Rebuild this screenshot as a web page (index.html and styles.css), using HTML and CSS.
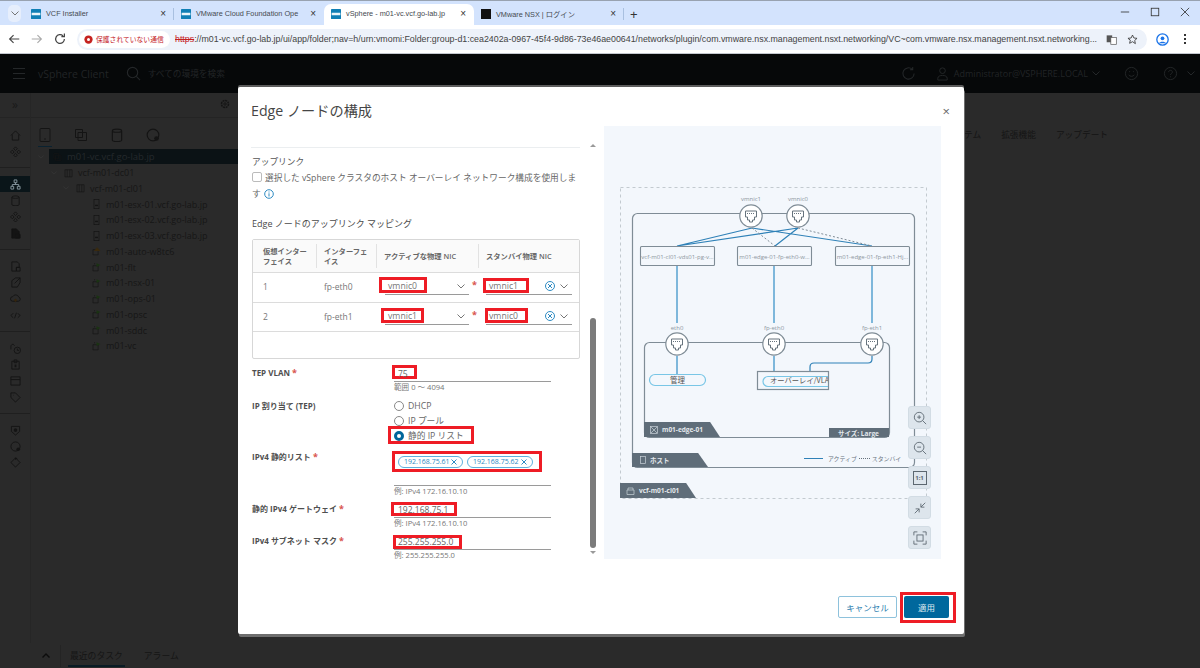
FILE: index.html
```html
<!DOCTYPE html>
<html lang="ja">
<head>
  <meta charset="UTF-8">
  <meta name="viewport" content="width=device-width, initial-scale=1.0">
  <title>vSphere - m01-vc.vcf.go-lab.jp</title>
  <link rel="stylesheet" href="styles.css">
</head>
<body>
  <svg class="defs" width="0" height="0">
    <defs>
      <symbol id="logo" viewBox="0 0 16 16">
        <rect width="16" height="16" rx="1" fill="#0f7fb5"/>
        <rect x="1" y="6" width="14" height="4" fill="#e8f4fa"/>
      </symbol>
      <symbol id="nic" viewBox="0 0 24 24">
        <circle cx="12" cy="12" r="11.200" fill="#fff" stroke="#7f8c96" stroke-width="1.200"/>
        <path d="M6.500 7h11v6h-2v3h-2v2h-3v-2h-2v-3h-2z" fill="none" stroke="#66737d" stroke-width="1"/>
        <path d="M8 9.500h8" stroke="#66737d" stroke-width="1.200" stroke-dasharray="1 1"/>
      </symbol>
      <symbol id="chev" viewBox="0 0 8 5"><path d="M.5.500L4 4l3.500-3.500" fill="none" stroke="#666" stroke-width=".9"/></symbol>
      <symbol id="clear" viewBox="0 0 10 10"><circle cx="5" cy="5" r="4.500" fill="none" stroke="#2d8ac2"/><path d="M3 3l4 4M7 3L3 7" stroke="#2d8ac2"/></symbol>
      <symbol id="r-home" viewBox="0 0 12 12"><path d="M1 6l5-5 5 5M2.500 5v6h7V5" fill="none" stroke="#141414"/></symbol>
      <symbol id="r-net" viewBox="0 0 12 12"><path d="M6 1l2 2-2 2-2-2zM2.500 4.500l2 2-2 2-2-2zM9.500 4.500l2 2-2 2-2-2zM6 8l2 2-2 2-2-2z" fill="none" stroke="#141414"/></symbol>
      <symbol id="r-tree" viewBox="0 0 12 12"><path d="M4.500 1h3v3h-3zM1 8h3v3H1zM8 8h3v3H8zM2.500 8V6h7v2M6 4v2" fill="none" stroke="#8a9aa2"/></symbol>
      <symbol id="r-db" viewBox="0 0 12 12"><path d="M2 2.500c0-2 8-2 8 0v8c0 1.500-8 1.500-8 0zM2 2.500c0 1.500 8 1.500 8 0" fill="none" stroke="#141414"/></symbol>
      <symbol id="r-doc" viewBox="0 0 12 12"><path d="M2 1h5l3 3v7H2zM6 7h5v4H6z" fill="#141414" stroke="#141414"/></symbol>
      <symbol id="r-page" viewBox="0 0 12 12"><path d="M2 1h6l2 2v4H7v4H2zM7 7h4v4H7z" fill="none" stroke="#141414"/></symbol>
      <symbol id="r-send" viewBox="0 0 12 12"><path d="M2 11V4l4-3h5v5l-3 5zM5 7l6-6" fill="none" stroke="#141414"/></symbol>
      <symbol id="r-cloud" viewBox="0 0 12 12"><path d="M3 9a2.500 2.500 0 0 1 0-5 3.500 3.500 0 0 1 6.500.5A2.300 2.300 0 0 1 9 9z" fill="none" stroke="#141414"/><path d="M6 6l2 2-2 2-2-2z" fill="#33250f"/></symbol>
      <symbol id="r-code" viewBox="0 0 12 12"><path d="M3.500 3.500L1 6l2.500 2.500M8.500 3.500L11 6 8.500 8.500M7 3L5 9" fill="none" stroke="#141414"/></symbol>
      <symbol id="r-clock" viewBox="0 0 12 12"><circle cx="8" cy="8" r="3.500" fill="none" stroke="#141414"/><path d="M8 6v2h2M1 7V3l2-2 2 2" fill="none" stroke="#141414"/></symbol>
      <symbol id="r-clip" viewBox="0 0 12 12"><path d="M2 2.500h8V11H2zM4.500 1h3v3h-3z" fill="none" stroke="#141414"/><path d="M5 6h2v3H5z" fill="#141414"/></symbol>
      <symbol id="r-box" viewBox="0 0 12 12"><path d="M1 2h10v9H1zM1 5h10" fill="none" stroke="#141414"/></symbol>
      <symbol id="r-tag" viewBox="0 0 12 12"><path d="M1 1h5l5 5-5 5-5-5zM3.500 3.500h.5" fill="none" stroke="#141414"/></symbol>
      <symbol id="r-shield" viewBox="0 0 12 12"><path d="M1.500 1.500h9V7l-4.500 4-4.500-4z" fill="none" stroke="#141414"/><circle cx="6" cy="5.500" r="2" fill="#141414"/></symbol>
      <symbol id="r-globe" viewBox="0 0 12 12"><circle cx="6" cy="6" r="5" fill="none" stroke="#141414"/><circle cx="9" cy="9" r="2" fill="#141414"/></symbol>
      <symbol id="r-cycle" viewBox="0 0 12 12"><path d="M6 1l5 5-5 5-5-5zM6 3V1l2 1" fill="none" stroke="#141414"/></symbol>
      <symbol id="t-phone" viewBox="0 0 14 14"><rect x="2" y=".5" width="10" height="13" rx="1" fill="none" stroke="#141414"/><path d="M6 11h2" stroke="#141414"/></symbol>
      <symbol id="t-vc" viewBox="0 0 14 14"><path d="M1.500 1.500h7v8h-7zM4 4.500h8.500v8H4z" fill="none" stroke="#141414"/></symbol>
      <symbol id="t-dc" viewBox="0 0 14 14"><path d="M1.500 2h11v11h-11zM5 2v11M9 2v11" fill="none" stroke="#141414"/></symbol>
      <symbol id="t-host" viewBox="0 0 10 14"><rect x="1.500" y=".5" width="7" height="13" fill="none" stroke="#141414"/><path d="M3 9h4" stroke="#141414" stroke-width="2"/></symbol>
      <symbol id="t-vm" viewBox="0 0 14 14"><path d="M1.500 5h8v8h-8zM4 3V1" fill="none" stroke="#141414"/><path d="M7 1l6 3-6 3z" fill="#1a3312"/></symbol>
      <symbol id="t-vmw" viewBox="0 0 14 14"><path d="M1.500 5h8v8h-8z" fill="none" stroke="#141414"/><path d="M8 1l5 6H3z" fill="#3a2a0d"/></symbol>
    </defs>
  </svg>

  <div class="tabstrip">
    <span class="tab-menu">
      <svg width="8" height="5"><use href="#chev"/></svg>
    </span>
    <div class="tab"><svg class="fav"><use href="#logo"/></svg><span class="tab-title">VCF Installer</span><span class="tab-x">&times;</span></div>
    <i class="tab-div"></i>
    <div class="tab"><svg class="fav"><use href="#logo"/></svg><span class="tab-title">VMware Cloud Foundation Ope</span><span class="tab-x">&times;</span></div>
    <div class="tab tab-active"><svg class="fav"><use href="#logo"/></svg><span class="tab-title">vSphere - m01-vc.vcf.go-lab.jp</span><span class="tab-x">&times;</span></div>
    <div class="tab"><span class="fav fav-nsx"></span><span class="tab-title">VMware NSX | ログイン</span><span class="tab-x">&times;</span></div>
    <i class="tab-div"></i>
    <span class="tab-plus">+</span>
    <div class="win-btns">
      <svg width="10" height="10" viewBox="0 0 12 12"><path d="M1 6h10" stroke="#333" fill="none"/></svg>
      <svg width="10" height="10" viewBox="0 0 12 12"><rect x="1.500" y="1.500" width="9" height="9" stroke="#333" fill="none"/></svg>
      <svg width="10" height="10" viewBox="0 0 12 12"><path d="M1 1l10 10M11 1L1 11" stroke="#333" fill="none"/></svg>
    </div>
  </div>

  <div class="toolbar">
    <svg class="tb-icon" viewBox="0 0 16 16"><path d="M14 8H3M7.500 3.500L3 8l4.500 4.500" stroke="#444" stroke-width="1.300" fill="none"/></svg>
    <svg class="tb-icon" viewBox="0 0 16 16"><path d="M2 8h11M8.500 3.500L13 8l-4.500 4.500" stroke="#aaa" stroke-width="1.300" fill="none"/></svg>
    <svg class="tb-icon" viewBox="0 0 16 16"><path d="M13 8a5 5 0 1 1-1.500-3.500M13 1.800v3.400H9.600" stroke="#444" stroke-width="1.400" fill="none"/></svg>
    <div class="omnibox">
      <span class="secure"><svg width="9" height="9" viewBox="0 0 12 12"><circle cx="6" cy="6" r="5.500" fill="#c5221f"/><circle cx="6" cy="6" r="2" fill="#fff"/></svg>保護されていない通信</span>
      <span class="url"><s class="https">https</s>://m01-vc.vcf.go-lab.jp/ui/app/folder;nav=h/urn:vmomi:Folder:group-d1:cea2402a-0967-45f4-9d86-73e46ae00641/networks/plugin/com.vmware.nsx.management.nsxt.networking/VC~com.vmware.nsx.management.nsxt.networking...</span>
      <svg class="omni-icon" viewBox="0 0 16 16"><rect x="1" y="2" width="8" height="10" fill="#555"/><rect x="7" y="5" width="8" height="10" fill="#fff" stroke="#555"/></svg>
      <svg class="omni-icon" viewBox="0 0 16 16"><path d="M8 1.500l2 4.300 4.600.5-3.400 3.100 1 4.600L8 11.200l-4.200 2.300 1-4.600L1.400 6.300 6 5.800z" fill="none" stroke="#333" stroke-width="1.200"/></svg>
    </div>
    <svg class="avatar" viewBox="0 0 16 16"><circle cx="8" cy="8" r="7" fill="none" stroke="#1a73e8" stroke-width="1.600"/><circle cx="8" cy="6.500" r="2.300" fill="#1a73e8"/><path d="M3.800 12.500c1-2.500 7.400-2.500 8.400 0" fill="#1a73e8"/></svg>
    <span class="kebab"><i></i><i></i><i></i></span>
  </div>

  <header class="app-header">
    <span class="burger"><i></i><i></i><i></i></span>
    <span class="brand">vSphere Client</span>
    <svg class="hd-icon" viewBox="0 0 16 16"><circle cx="7" cy="7" r="5.500" fill="none" stroke="#242729" stroke-width="1.200"/><path d="M11 11l4 4" stroke="#242729" stroke-width="1.200"/></svg>
    <span class="search">すべての環境を検索</span>
    <span class="hd-right">
      <svg class="hd-icon" viewBox="0 0 16 16"><path d="M14 8a6 6 0 1 1-2-4.500M12.500 1v3h-3" fill="none" stroke="#242729" stroke-width="1.100"/></svg>
      <span class="hd-user"><svg class="hd-icon" viewBox="0 0 16 16"><circle cx="8" cy="5" r="3" fill="none" stroke="#242729"/><path d="M3 15v-2c0-4 10-4 10 0v2z" fill="none" stroke="#242729"/></svg>Administrator@VSPHERE.LOCAL<svg class="hd-chev" viewBox="0 0 8 5"><path d="M.5.500L4 4l3.500-3.500" fill="none" stroke="#242729"/></svg></span>
      <svg class="hd-icon" viewBox="0 0 16 16"><circle cx="8" cy="8" r="6.500" fill="none" stroke="#242729"/><path d="M5 9.500c1.500 2 4.500 2 6 0M5.500 6h1M9.500 6h1" fill="none" stroke="#242729"/></svg>
      <span class="hd-help"><svg class="hd-icon" viewBox="0 0 16 16"><circle cx="8" cy="8" r="6.500" fill="none" stroke="#242729"/><path d="M6 6.500c0-2.500 4-2.500 4 0 0 1.500-2 1.500-2 3M8 11v1" fill="none" stroke="#242729"/></svg><svg class="hd-chev" viewBox="0 0 8 5"><path d="M.5.500L4 4l3.500-3.500" fill="none" stroke="#242729"/></svg></span>
    </span>
  </header>

  <div class="app-body">
    <aside class="rail">
      <div class="rail-top">&raquo;</div>
      <div class="rail-group rail-first">
        <span class="r-ic"><svg><use href="#r-home"/></svg></span>
        <span class="r-ic"><svg><use href="#r-net"/></svg></span>
      </div>
      <div class="rail-group">
        <span class="r-ic r-sel"><svg><use href="#r-tree"/></svg></span>
        <span class="r-ic"><svg><use href="#r-db"/></svg></span>
        <span class="r-ic"><svg><use href="#r-net"/></svg></span>
        <span class="r-ic"><svg><use href="#r-doc"/></svg></span>
      </div>
      <div class="rail-group">
        <span class="r-ic"><svg><use href="#r-page"/></svg></span>
        <span class="r-ic"><svg><use href="#r-send"/></svg></span>
        <span class="r-ic"><svg><use href="#r-cloud"/></svg></span>
        <span class="r-ic"><svg><use href="#r-code"/></svg></span>
      </div>
      <div class="rail-group">
        <span class="r-ic"><svg><use href="#r-clock"/></svg></span>
        <span class="r-ic"><svg><use href="#r-clip"/></svg></span>
        <span class="r-ic"><svg><use href="#r-box"/></svg></span>
        <span class="r-ic"><svg><use href="#r-tag"/></svg></span>
      </div>
      <div class="rail-group rail-last">
        <span class="r-ic"><svg><use href="#r-shield"/></svg></span>
        <span class="r-ic"><svg><use href="#r-globe"/></svg></span>
        <span class="r-ic"><svg><use href="#r-cycle"/></svg></span>
      </div>
    </aside>
    <section class="tree-pane">
      <div class="tree-top">
        <svg width="10" height="10" viewBox="0 0 10 10"><circle cx="5" cy="5" r="3.500" fill="none" stroke="#141414" stroke-width="1.500" stroke-dasharray="2 .7"/><circle cx="5" cy="5" r="1.200" fill="none" stroke="#141414"/></svg>
      </div>
      <div class="tree-tools">
        <span class="tree-tab tree-tab-on"><svg><use href="#t-phone"/></svg></span>
        <span class="tree-tab"><svg><use href="#t-vc"/></svg></span>
        <span class="tree-tab"><svg><use href="#r-db"/></svg></span>
        <span class="tree-tab"><svg><use href="#r-globe"/></svg></span>
      </div>
      <ul class="tree">
        <li class="lv0"><svg class="tw"><use href="#chev"/></svg><span class="tree-sel"><svg class="node"><use href="#t-vc"/></svg>m01-vc.vcf.go-lab.jp</span></li>
        <li class="lv1"><svg class="tw"><use href="#chev"/></svg><svg class="node"><use href="#t-dc"/></svg>vcf-m01-dc01</li>
        <li class="lv2"><svg class="tw"><use href="#chev"/></svg><svg class="node"><use href="#t-dc"/></svg>vcf-m01-cl01</li>
        <li class="lv3"><svg class="node"><use href="#t-host"/></svg>m01-esx-01.vcf.go-lab.jp</li>
        <li class="lv3"><svg class="node"><use href="#t-host"/></svg>m01-esx-02.vcf.go-lab.jp</li>
        <li class="lv3"><svg class="node"><use href="#t-host"/></svg>m01-esx-03.vcf.go-lab.jp</li>
        <li class="lv3"><svg class="node"><use href="#t-vmw"/></svg>m01-auto-w8tc6</li>
        <li class="lv3"><svg class="node"><use href="#t-vm"/></svg>m01-flt</li>
        <li class="lv3"><svg class="node"><use href="#t-vm"/></svg>m01-nsx-01</li>
        <li class="lv3"><svg class="node"><use href="#t-vm"/></svg>m01-ops-01</li>
        <li class="lv3"><svg class="node"><use href="#t-vm"/></svg>m01-opsc</li>
        <li class="lv3"><svg class="node"><use href="#t-vm"/></svg>m01-sddc</li>
        <li class="lv3"><svg class="node"><use href="#t-vm"/></svg>m01-vc</li>
      </ul>
    </section>
    <section class="main-pane">
      <div class="main-tabs"><span>システム</span><span>拡張機能</span><span>アップデート</span></div>
    </section>
  </div>

  <footer class="task-bar">
    <span class="task-chev"><svg width="8" height="5" viewBox="0 0 8 5"><path d="M.5 4.500L4 1l3.500 3.500" fill="none" stroke="#0c0c0c" stroke-width="1.400"/></svg></span>
    <span class="task-tab task-tab-on">最近のタスク</span>
    <span class="task-tab">アラーム</span>
  </footer>

  <div class="modal">
    <div class="modal-head">
      <h2>Edge ノードの構成</h2>
      <span class="modal-x">&times;</span>
    </div>
    <div class="modal-body">
      <div class="form-pane">
        <div class="form-scroll">
          <div class="form-rule"></div>
          <h3 class="uplink-title">アップリンク</h3>
          <label class="check-row"><span class="checkbox"></span>選択した vSphere クラスタのホスト オーバーレイ ネットワーク構成を使用します<svg class="info" viewBox="0 0 10 10"><circle cx="5" cy="5" r="4.300" fill="none" stroke="#2d8ac2"/><path d="M5 4.300v3.200M5 2.500v1" stroke="#2d8ac2"/></svg></label>
          <h3 class="map-title">Edge ノードのアップリンク マッピング</h3>
          <div class="map-table">
            <div class="map-row map-head">
              <div class="c1 sep"><span>仮想インター<br>フェイス</span></div>
              <div class="c2 sep"><span>インターフェ<br>イス</span></div>
              <div class="c3 sep">アクティブな物理 NIC</div>
              <div class="c4">スタンバイ物理 NIC</div>
            </div>
            <div class="map-row row-a">
              <div class="c1">1</div>
              <div class="c2">fp-eth0</div>
              <div class="c3"><div class="select"><span class="val">vmnic0</span><span class="mark mk-a0"></span><svg class="chev"><use href="#chev"/></svg></div><b class="req">*</b></div>
              <div class="c4"><div class="select select-wide"><span class="val">vmnic1</span><span class="mark mk-a1"></span><svg class="clear"><use href="#clear"/></svg><svg class="chev"><use href="#chev"/></svg></div></div>
            </div>
            <div class="map-row row-b">
              <div class="c1">2</div>
              <div class="c2">fp-eth1</div>
              <div class="c3"><div class="select"><span class="val">vmnic1</span><span class="mark mk-b0"></span><svg class="chev"><use href="#chev"/></svg></div><b class="req">*</b></div>
              <div class="c4"><div class="select select-wide"><span class="val">vmnic0</span><span class="mark mk-b1"></span><svg class="clear"><use href="#clear"/></svg><svg class="chev"><use href="#chev"/></svg></div></div>
            </div>
          </div>

          <div class="field f-vlan">
            <label>TEP VLAN <b class="req">*</b></label>
            <div class="control">
              <div class="input"><span class="val">75</span><span class="mark mk-vlan"></span></div>
              <p class="hint">範囲 0 ～ 4094</p>
            </div>
          </div>
          <div class="field f-radio">
            <label>IP 割り当て (TEP)</label>
            <div class="control">
              <div class="radio"><span class="dot"></span>DHCP</div>
              <div class="radio"><span class="dot"></span>IP プール</div>
              <div class="radio radio-on"><span class="dot"></span>静的 IP リスト<span class="mark mk-radio"></span></div>
            </div>
          </div>
          <div class="field f-list">
            <label>IPv4 静的リスト <b class="req">*</b></label>
            <div class="control">
              <div class="input input-list">
                <span class="chip">192.168.75.61<svg width="6" height="6" viewBox="0 0 6 6"><path d="M.5.500l5 5M5.500.500l-5 5" stroke="#2d8ac2"/></svg></span>
                <span class="chip">192.168.75.62<svg width="6" height="6" viewBox="0 0 6 6"><path d="M.5.500l5 5M5.500.500l-5 5" stroke="#2d8ac2"/></svg></span>
                <span class="mark mk-list"></span>
              </div>
              <p class="hint">例: IPv4 172.16.10.10</p>
            </div>
          </div>
          <div class="field f-gw">
            <label>静的 IPv4 ゲートウェイ <b class="req">*</b></label>
            <div class="control">
              <div class="input"><span class="val">192.168.75.1</span><span class="mark mk-gw"></span></div>
              <p class="hint">例: IPv4 172.16.10.10</p>
            </div>
          </div>
          <div class="field f-mask">
            <label>IPv4 サブネット マスク <b class="req">*</b></label>
            <div class="control">
              <div class="input"><span class="val">255.255.255.0</span><span class="mark mk-mask"></span></div>
              <p class="hint">例: 255.255.255.0</p>
            </div>
          </div>
        </div>
        <div class="scrollbar"><span class="sb-up"></span><span class="sb-thumb"></span><span class="sb-down"></span></div>
      </div>

      <div class="diagram">
        <svg class="diagram-svg" width="337" height="380" viewBox="0 0 337 380" font-family="'Open Sans','Noto Sans CJK JP',sans-serif">
          <rect x="16.500" y="61.500" width="306" height="311" fill="none" stroke="#c3cad0" stroke-dasharray="3 3"/>
          <rect x="28.500" y="87.500" width="282" height="254" rx="5" fill="none" stroke="#7f8c96" stroke-width="1.200"/>
          <rect x="40.500" y="216.500" width="245" height="95" rx="5" fill="none" stroke="#7f8c96" stroke-width="1.200"/>

          <g stroke="#2f81b7" stroke-width="1.200" fill="none">
            <path d="M148 102L73 120M194 102L73 120M148 102L268 120M194 102L171 120"/>
            <path stroke-width="1.500" stroke="#58a3d0" d="M73 140V197M170 140V197M268 140V197"/>
            <path stroke-width="1.500" stroke="#58a3d0" d="M73 230V248M170 230V245"/>
            <path d="M268 230v3q0 4-4 4h-54q-4 0-4 4v4"/>
          </g>
          <path d="M148 102L171 120M194 102L268 120" stroke="#7f8c96" stroke-dasharray="2 2" fill="none"/>

          <g fill="#f3f7fc" stroke="#7f8c96" stroke-width="1.100">
            <rect x="36.500" y="120.500" width="74" height="19" rx="1"/>
            <rect x="133.500" y="120.500" width="74" height="19" rx="1"/>
            <rect x="231.500" y="120.500" width="74" height="19" rx="1"/>
          </g>
          <g font-size="6" fill="#8c969e" text-anchor="middle">
            <text x="73.500" y="132.500">vcf-m01-cl01-vds01-pg-v...</text>
            <text x="170.500" y="132.500">m01-edge-01-fp-eth0-w...</text>
            <text x="268.500" y="132.500">m01-edge-01-fp-eth1-Hj...</text>
            <text x="147" y="75">vmnic1</text>
            <text x="194" y="75">vmnic0</text>
            <text x="73" y="204">eth0</text>
            <text x="170" y="204">fp-eth0</text>
            <text x="268" y="204">fp-eth1</text>
          </g>

          <use href="#nic" x="135" y="78" width="24" height="24"/>
          <use href="#nic" x="182" y="78" width="24" height="24"/>
          <use href="#nic" x="61" y="206" width="24" height="24"/>
          <use href="#nic" x="158" y="206" width="24" height="24"/>
          <use href="#nic" x="256" y="206" width="24" height="24"/>

          <rect x="45.500" y="248.500" width="56" height="11" rx="5.500" fill="#f3f7fc" stroke="#79c6e6" stroke-width="1.200"/>
          <text x="73.500" y="257" font-size="7.500" fill="#555" text-anchor="middle" font-family="'Noto Sans CJK JP',sans-serif">管理</text>
          <rect x="153.500" y="245.500" width="71" height="18" fill="#f3f7fc" stroke="#7f8c96" stroke-width="1.200"/>
          <path d="M224 250.500h-60a5 5 0 0 0 0 10h60" fill="none" stroke="#79c6e6" stroke-width="1.200"/>
          <svg x="153" y="245" width="71" height="18" viewBox="0 0 71 18">
            <text x="13" y="12" font-size="7.300" fill="#555" font-family="'Noto Sans CJK JP',sans-serif">オーバーレイ/VLAN</text>
          </svg>
        </svg>
        <div class="d-tag tag-edge"><svg width="8" height="8" viewBox="0 0 8 8"><rect x=".5" y=".5" width="7" height="7" fill="none" stroke="#c9d2d9" stroke-width=".7"/><path d="M1 1l6 6M7 1L1 7" stroke="#c9d2d9" stroke-width=".7"/></svg>m01-edge-01</div>
        <div class="d-tag tag-size">サイズ: Large</div>
        <div class="d-tag tag-host"><svg width="6" height="8" viewBox="0 0 6 8"><rect x=".5" y=".5" width="5" height="7" fill="none" stroke="#c9d2d9" stroke-width=".7"/></svg>ホスト</div>
        <div class="d-tag tag-cluster"><svg width="9" height="8" viewBox="0 0 9 8"><path d="M1 3h7v4.500H1zM2 3V1h5v2" fill="none" stroke="#c9d2d9" stroke-width=".7"/></svg>vcf-m01-cl01</div>
        <div class="legend"><i></i>アクティブ<u></u>スタンバイ</div>
        <div class="zoom-tools">
          <span class="ztool"><svg width="14" height="14" viewBox="0 0 16 16"><circle cx="7" cy="7" r="5.500" fill="none" stroke="#5c6770"/><path d="M11 11l4 4M4.800 7h4.400M7 4.800v4.400" stroke="#5c6770"/></svg></span>
          <span class="ztool"><svg width="14" height="14" viewBox="0 0 16 16"><circle cx="7" cy="7" r="5.500" fill="none" stroke="#5c6770"/><path d="M11 11l4 4M4.800 7h4.400" stroke="#5c6770"/></svg></span>
          <span class="ztool"><span class="one-one">1:1</span></span>
          <span class="ztool"><svg width="14" height="14" viewBox="0 0 16 16"><path d="M2 14l5-5M3 9h4v4M14 2L9 7M9 3v4h4" fill="none" stroke="#5c6770"/></svg></span>
          <span class="ztool"><svg width="14" height="14" viewBox="0 0 16 16"><rect x="4.500" y="4.500" width="7" height="7" fill="none" stroke="#5c6770"/><path d="M1 5V1h4M11 1h4v4M15 11v4h-4M5 15H1v-4" fill="none" stroke="#5c6770"/></svg></span>
        </div>
      </div>
    </div>
    <div class="modal-foot">
      <button class="btn btn-ghost">キャンセル</button>
      <span class="apply-mark"><button class="btn btn-apply">適用</button></span>
    </div>
  </div>
</body>
</html>
```

FILE: styles.css
```css
* {
  box-sizing: border-box;
}

html, body {
  margin: 0;
  padding: 0;
  height: 668px;
  overflow: hidden;
}

body {
  position: relative;
  display: flex;
  flex-direction: column;
  font-family: "Open Sans", "Noto Sans CJK JP", sans-serif;
  background: #2a2a2a;
  color: #666;
}

.defs {
  position: absolute;
}

/* browser chrome */
.tabstrip {
  height: 25px;
  flex: none;
  display: flex;
  align-items: flex-end;
  background: #d3e3fd;
  border-top: 1px solid #98a2b0;
  padding-left: 8px;
  font-family: "Liberation Sans", "Noto Sans CJK JP", sans-serif;
  font-size: 7.300px;
  color: #454a50;
}

.tab-menu {
  width: 13px;
  height: 17px;
  margin: 0 3px 3px 0;
  display: flex;
  align-items: center;
  justify-content: center;
  background: #e6eefc;
  border-radius: 5px;
}

.tab {
  width: 150px;
  height: 21px;
  flex: none;
  display: flex;
  align-items: center;
  padding: 0 8px 2px 7px;
  gap: 5px;
}

.tab-div {
  width: 1px;
  height: 12px;
  margin: 0 0 5px -1px;
  background: #a9c0e0;
}

.tab-active {
  background: #fff;
  border-radius: 7px 7px 0 0;
}

.fav {
  width: 10px;
  height: 10px;
  flex: none;
}

.fav-nsx {
  background: #111;
}

.tab-title {
  flex: 1;
  white-space: nowrap;
}

.tab-x {
  font-size: 10px;
  color: #333;
}

.tab-plus {
  font-size: 13px;
  line-height: 20px;
  padding-left: 6px;
  color: #333;
}

.win-btns {
  margin-left: auto;
  height: 24px;
  display: flex;
  align-items: center;
  gap: 20px;
  padding: 0 10px 2px 0;
}

.toolbar {
  height: 29px;
  flex: none;
  display: flex;
  align-items: center;
  background: #fff;
  padding-left: 7px;
  border-bottom: 1px solid #c3c7cf;
}

.tb-icon {
  width: 14px;
  height: 14px;
  margin-right: 9px;
  flex: none;
}

.omnibox {
  width: 1070px;
  height: 21px;
  margin-left: 1px;
  flex: none;
  display: flex;
  align-items: center;
  background: #edf2fa;
  border-radius: 11px;
  padding-left: 2px;
  font-family: "Liberation Sans", "Noto Sans CJK JP", sans-serif;
  color: #444;
}

.secure {
  height: 17px;
  width: 91px;
  flex: none;
  display: flex;
  align-items: center;
  gap: 3px;
  padding-left: 5px;
  background: #fff;
  border-radius: 9px;
  color: #c5221f;
  font-size: 6.800px;
  white-space: nowrap;
}

.url {
  flex: none;
  width: 931px;
  margin-left: 5px;
  white-space: nowrap;
  font-size: 8.830px;
}

.https {
  color: #c5221f;
}

.omni-icon {
  width: 11px;
  height: 11px;
  margin-right: 10px;
  flex: none;
}

.avatar {
  width: 13px;
  height: 13px;
  margin-left: 9px;
  flex: none;
}

.kebab {
  display: flex;
  flex-direction: column;
  gap: 2px;
  margin-left: 15px;
}

.kebab i {
  display: block;
  width: 2px;
  height: 2px;
  background: #333;
}

/* dimmed vSphere client behind the dialog */
.app-header {
  height: 39px;
  flex: none;
  display: flex;
  align-items: center;
  background: #060809;
  padding-left: 13px;
  color: #212426;
  font-size: 9px;
}

.burger {
  display: flex;
  flex-direction: column;
  gap: 4px;
  margin-right: 13px;
}

.burger i {
  display: block;
  width: 12px;
  height: 1px;
  background: #242729;
}

.brand {
  font-size: 10.500px;
  margin-right: 17px;
}

.hd-icon {
  width: 15px;
  height: 15px;
  margin-right: 7px;
  flex: none;
}

.search {
  font-size: 8.700px;
}

.hd-right {
  margin-left: auto;
  display: flex;
  align-items: center;
  padding-right: 5px;
}

.hd-right > .hd-icon {
  margin-right: 0;
}

.hd-user {
  display: flex;
  align-items: center;
  white-space: nowrap;
  font-size: 9px;
  margin: 0 24px 0 19px;
}

.hd-user .hd-icon {
  margin-right: 4px;
}

.hd-help {
  display: flex;
  align-items: center;
  margin-left: 24px;
}

.hd-help .hd-icon {
  margin-right: 5px;
}

.hd-chev {
  width: 8px;
  height: 5px;
  margin-left: 4px;
  flex: none;
}

.app-body {
  flex: 1;
  display: flex;
  min-height: 0;
}

.rail {
  width: 31px;
  flex: none;
  border-right: 1px solid #262626;
}

.rail-top {
  height: 25px;
  text-align: center;
  font-size: 12px;
  line-height: 24px;
  color: #191919;
  border-bottom: 1px solid #242424;
}

.rail-group {
  height: 82px;
  display: flex;
  flex-direction: column;
  padding-top: 8px;
  border-bottom: 1px solid #1f1f1f;
}

.rail-first {
  height: 50px;
  padding-top: 9px;
}

.rail-last {
  border-bottom: 0;
}

.r-ic {
  height: 16.300px;
  flex: none;
  display: flex;
  align-items: center;
  justify-content: center;
}

.r-ic svg {
  width: 11px;
  height: 11px;
}

.r-sel {
  background: #0a1519;
}

.tree-pane {
  width: 207px;
  flex: none;
}

.tree-top {
  height: 25px;
  display: flex;
  align-items: center;
  justify-content: flex-end;
  padding: 0 8px 2px 0;
  border-bottom: 1px solid #242424;
}

.tree-tools {
  height: 31px;
  display: flex;
  gap: 22px;
  padding: 10px 0 0 7px;
}

.tree-tab {
  width: 14px;
  height: 19px;
  padding-bottom: 5px;
}

.tree-tab svg {
  display: block;
  width: 14px;
  height: 14px;
}

.tree-tab-on {
  border-bottom: 1px solid #0a2230;
}

.tree {
  list-style: none;
  margin: 0;
  padding: 0;
  font-size: 9px;
  color: #161616;
}

.tree li {
  height: 15.750px;
  display: flex;
  align-items: center;
  white-space: nowrap;
}

.tw {
  width: 6px;
  height: 4px;
  flex: none;
  opacity: .25;
}

.node {
  width: 9px;
  height: 10px;
  margin-right: 5px;
  flex: none;
}

.tree-sel {
  height: 15px;
  flex: 1;
  display: flex;
  align-items: center;
  margin-left: 5px;
  padding-left: 4px;
  background: #0b1215;
  font-size: 9.500px;
  color: #24292c;
}

.lv0 {
  padding-left: 7px;
}

.lv1 {
  padding-left: 20px;
}

.lv2 {
  padding-left: 32px;
}

.lv1 .tw, .lv2 .tw {
  margin-right: 7px;
}

.lv3 {
  padding-left: 61px;
}

.main-pane {
  flex: 1;
}

.main-tabs {
  display: flex;
  justify-content: flex-end;
  gap: 20px;
  padding: 35px 92px 0 0;
  font-size: 8.700px;
  color: #141414;
}

.task-bar {
  height: 25px;
  flex: none;
  display: flex;
  align-items: center;
  padding-left: 42px;
  font-size: 8.800px;
  color: #151515;
}

.task-chev {
  width: 19px;
  height: 22px;
  display: flex;
  align-items: center;
  border-right: 1px solid #242424;
  margin-right: 7px;
}

.task-tab {
  height: 22px;
  line-height: 22px;
  padding: 0 2px;
  margin-right: 17px;
}

.task-tab-on {
  border-bottom: 2px solid #0a1b24;
}

/* dialog */
.modal {
  position: absolute;
  left: 238px;
  top: 87px;
  width: 726px;
  height: 547px;
  display: flex;
  flex-direction: column;
  background: #fff;
  border-radius: 2px;
  box-shadow: 1px 3px 0 #6e6e6e, 0 -2px 0 #5c5c5c;
  padding: 0 13px;
}

.modal-head {
  height: 39px;
  flex: none;
  display: flex;
  align-items: center;
  justify-content: space-between;
  padding-top: 9px;
}

.modal-head h2 {
  margin: 0;
  font-size: 14.200px;
  font-weight: 400;
  line-height: 24px;
  color: #454545;
}

.modal-x {
  font-size: 13px;
  line-height: 24px;
  color: #666;
  margin-right: 1px;
}

.modal-body {
  height: 465px;
  flex: none;
  display: flex;
}

.form-pane {
  width: 353px;
  flex: none;
  display: flex;
}

.form-scroll {
  width: 329px;
  flex: none;
  padding-top: 21px;
  font-size: 8.700px;
}

.form-rule {
  height: 1px;
  background: #ebeef0;
}

.scrollbar {
  width: 8px;
  height: 430px;
  margin-left: 9px;
  display: flex;
  flex-direction: column;
  align-items: center;
  padding-top: 18px;
}

.sb-up, .sb-down {
  width: 0;
  height: 0;
  flex: none;
  border-left: 3px solid transparent;
  border-right: 3px solid transparent;
}

.sb-up {
  border-bottom: 3px solid #999;
}

.sb-down {
  border-top: 3px solid #999;
  margin-top: 3px;
}

.sb-thumb {
  width: 6px;
  height: 230px;
  flex: none;
  margin-top: 171px;
  background: #7b7b7b;
  border-radius: 3px;
}

.uplink-title {
  margin: 7px 0 0 1px;
  font-size: 8.700px;
  font-weight: 400;
  line-height: 14px;
  color: #555;
}

.check-row {
  display: block;
  margin: 1px 0 0 1px;
  padding-right: 3px;
  line-height: 16px;
  color: #666;
}

.checkbox {
  display: inline-block;
  width: 10px;
  height: 10px;
  margin-right: 3px;
  vertical-align: -1px;
  border: 1px solid #bbb;
  border-radius: 2px;
}

.info {
  display: inline-block;
  width: 10px;
  height: 10px;
  margin-left: 3px;
  vertical-align: -2px;
}

.map-title {
  margin: 14px 0 7px 1px;
  font-size: 9px;
  font-weight: 400;
  line-height: 16px;
  color: #4a4a4a;
}

.map-table {
  margin-left: 1px;
  height: 120px;
  border: 1px solid #d7d7d7;
  border-radius: 2px;
  font-size: 8.500px;
  color: #777;
}

.map-row {
  display: grid;
  grid-template-columns: 64px 60px 102px 1fr;
  height: 30px;
  border-bottom: 1px solid #dcdcdc;
  padding-top: 5px;
  line-height: 17px;
}

.row-b {
  height: 29px;
}

.map-head {
  height: 33px;
  padding-top: 4px;
  background: #fafafa;
  color: #666;
  font-size: 7.300px;
  font-weight: 600;
  line-height: 10px;
}

.c1 {
  padding-left: 10px;
}

.c2 {
  padding-left: 7px;
}

.c3, .c4 {
  display: flex;
  padding-left: 7px;
}

.map-head .c4 {
  height: 24px;
  align-items: center;
}

.map-row:not(.map-head) .c3 {
  padding-left: 8px;
}

.sep {
  height: 24px;
  display: flex;
  align-items: center;
  border-right: 1px solid #e2e2e2;
}

.select {
  position: relative;
  width: 84px;
  height: 17px;
  flex: none;
  display: flex;
  align-items: center;
  border-bottom: 1px solid #9a9a9a;
  padding: 0 4px 0 3px;
  gap: 5px;
  font-size: 8.700px;
  color: #777;
}

.select-wide {
  width: 86px;
}

.select .val {
  margin-right: auto;
}

.chev {
  width: 8px;
  height: 5px;
  flex: none;
}

.clear {
  width: 10px;
  height: 10px;
  flex: none;
}

.req {
  color: #d9534f;
  font-weight: 700;
  font-size: 9px;
}

.c3 .req {
  margin-left: 3px;
  line-height: 13px;
}

/* red review marks drawn over the screenshot */
.mark {
  position: absolute;
  border: 3px solid #ee1c25;
}

.val {
  position: relative;
  z-index: 1;
}

.mk-a0 { left: -6px; top: -1px; width: 48px; height: 16px; }
.mk-a1 { left: -3px; top: 0; width: 46px; height: 15px; }
.mk-b0 { left: -4px; top: 0; width: 43px; height: 15px; }
.mk-b1 { left: -1px; top: 0; width: 43px; height: 15px; }
.mk-vlan { left: -2px; top: -1px; width: 25px; height: 14px; }
.mk-radio { left: -6px; top: -2px; width: 86px; height: 18px; }
.mk-list { left: -2px; top: 1px; width: 150px; height: 21px; }
.mk-gw { left: -3px; top: 0; width: 66px; height: 14px; }
.mk-mask { left: -1px; top: 1px; width: 69px; height: 14px; }

.field {
  display: flex;
}

.field > label {
  width: 143px;
  flex: none;
  padding-left: 1px;
  font-weight: 700;
  font-size: 8px;
  color: #4f4f4f;
  line-height: 14px;
}

.control {
  width: 157px;
  flex: none;
}

.input {
  position: relative;
  height: 16px;
  padding-left: 4px;
  border-bottom: 1px solid #9a9a9a;
  font-size: 8.500px;
  line-height: 16px;
  color: #666;
}

.hint {
  margin: 0;
  font-size: 7.600px;
  line-height: 10px;
  color: #777;
}

.f-vlan, .f-radio, .f-gw, .f-mask {
  margin-top: 6px;
}

.f-vlan {
  margin-top: 7px;
}

.f-radio > label {
  line-height: 15px;
}

.radio {
  position: relative;
  height: 15px;
  display: flex;
  align-items: center;
  gap: 4px;
  font-size: 8.700px;
  color: #666;
}

.dot {
  width: 10px;
  height: 10px;
  flex: none;
  border: 1px solid #888;
  border-radius: 50%;
  background: #fff;
}

.radio-on .dot {
  border: 3px solid #00669b;
}

.f-list {
  margin-top: 7px;
}

.input-list {
  height: 36px;
  display: flex;
  align-items: flex-start;
  gap: 4px;
  padding-top: 6px;
}

.chip {
  width: 65px;
  height: 12px;
  flex: none;
  display: flex;
  align-items: center;
  justify-content: space-between;
  padding: 0 5px;
  border: 1px solid #5fb0dd;
  border-radius: 6px;
  font-size: 7px;
  line-height: 10px;
  color: #2d8ac2;
  white-space: nowrap;
}

.chip + .chip {
  width: 66px;
}

/* topology diagram */
.diagram {
  position: relative;
  width: 337px;
  height: 433px;
  background: #f3f7fc;
  overflow: hidden;
}

.diagram-svg {
  display: block;
}

.d-tag {
  position: absolute;
  display: flex;
  align-items: center;
  gap: 4px;
  padding-left: 6px;
  background: #5f6d79;
  color: #e3e8ec;
  font-size: 6.500px;
  font-weight: 700;
  white-space: nowrap;
}

.tag-edge {
  left: 40px;
  top: 296px;
  width: 76px;
  height: 15px;
  clip-path: polygon(0 0, 87% 0, 100% 100%, 0 100%);
}

.tag-size {
  left: 225px;
  top: 302px;
  width: 60px;
  height: 9px;
  padding-left: 9px;
}

.tag-host {
  left: 28px;
  top: 327px;
  width: 76px;
  height: 14px;
  padding-left: 8px;
  clip-path: polygon(0 0, 87% 0, 100% 100%, 0 100%);
}

.tag-cluster {
  left: 16px;
  top: 357px;
  width: 76px;
  height: 15px;
  clip-path: polygon(0 0, 87% 0, 100% 100%, 0 100%);
}

.legend {
  position: absolute;
  left: 200px;
  top: 328px;
  display: flex;
  align-items: center;
  font-size: 5.900px;
  color: #66727c;
  white-space: nowrap;
}

.legend i {
  width: 19px;
  border-top: 1px solid #2f81b7;
  margin-right: 5px;
}

.legend u {
  width: 11px;
  border-top: 1px dotted #66727c;
  margin: 0 2px;
}

.zoom-tools {
  position: absolute;
  left: 304px;
  top: 280px;
  display: flex;
  flex-direction: column;
  gap: 7px;
}

.ztool {
  width: 23px;
  height: 23px;
  display: flex;
  align-items: center;
  justify-content: center;
  background: #dde5ec;
  border: 1px solid #d2dce4;
  border-radius: 3px;
}

.one-one {
  width: 14px;
  height: 14px;
  border: 1px solid #5c6770;
  font-size: 6px;
  line-height: 12px;
  text-align: center;
  font-weight: 700;
  color: #5c6770;
}

.modal-foot {
  height: 43px;
  flex: none;
  display: flex;
  justify-content: flex-end;
  padding-top: 1px;
}

.btn {
  height: 22px;
  border-radius: 2px;
  font-family: inherit;
  font-size: 8.500px;
  padding: 0;
}

.btn-ghost {
  width: 59px;
  margin: 4px 3px 0 0;
  background: #fff;
  border: 1px solid #8ec2dc;
  color: #2f81b0;
}

.apply-mark {
  height: 31px;
  width: 56px;
  display: block;
  margin-right: -5px;
  border: 3px solid #ee1c25;
  padding: 1px 0 0 1px;
}

.btn-apply {
  display: block;
  width: 45px;
  background: #00689d;
  border: 0;
  color: #dfeaf0;
}
```
